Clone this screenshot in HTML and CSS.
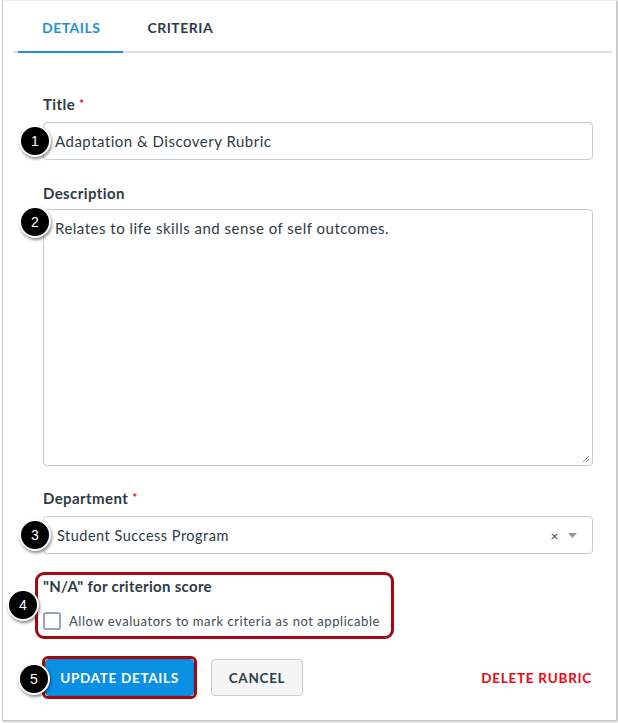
FILE: index.html
```html
<!DOCTYPE html>
<html>
<head>
<meta charset="utf-8">
<link rel="stylesheet" href="styles.css">
</head>
<body>
<div class="panel">
  <div class="tabs">
    <div class="tab active">DETAILS</div>
    <div class="tab">CRITERIA</div>
  </div>
  <div class="form">
    <div class="field">
      <label class="label">Title <span class="req">*</span></label>
      <div class="control input">
        <span class="badge b1">1</span>
        Adaptation &amp; Discovery Rubric
      </div>
    </div>
    <div class="field">
      <label class="label">Description</label>
      <div class="control textarea">
        <span class="badge b2">2</span>
        Relates to life skills and sense of self outcomes.
        <svg class="grip" width="8" height="8" viewBox="0 0 8 8"><path d="M7 1 L1 7 M7 4 L4 7" stroke="#8d959b" stroke-width="1"/></svg>
      </div>
    </div>
    <div class="field">
      <label class="label">Department <span class="req">*</span></label>
      <div class="control select">
        <span class="badge b3">3</span>
        <span class="sel-text">Student Success Program</span>
        <span class="sel-x">×</span>
        <svg class="sel-caret" width="9" height="5" viewBox="0 0 9 5"><path d="M0 0 H9 L4.5 5 Z" fill="#8d959b"/></svg>
      </div>
    </div>
    <div class="na-box">
      <span class="badge b4">4</span>
      <div class="na-label">"N/A" for criterion score</div>
      <div class="check-row">
        <span class="checkbox"></span>
        <span class="check-text">Allow evaluators to mark criteria as not applicable</span>
      </div>
    </div>
    <div class="actions">
      <div class="hl-btn">
        <span class="badge b5">5</span>
        <button class="btn primary">UPDATE DETAILS</button>
      </div>
      <button class="btn secondary">CANCEL</button>
      <span class="delete">DELETE RUBRIC</span>
    </div>
  </div>
</div>
</body>
</html>
```
FILE: styles.css
```css
* { box-sizing: border-box; }
html, body { margin: 0; padding: 0; background: #fff; }
body {
  font-family: Lato, "Liberation Sans", sans-serif;
  color: #2d3b45;
  width: 618px;
  height: 723px;
  overflow: hidden;
}
.panel {
  margin-left: 2px;
  width: 615px;
  height: 721px;
  border: 1px solid #c9c9c9;
  border-top-color: #ececec;
  box-shadow: 1px 1px 2px rgba(0,0,0,0.25);
  padding: 0 4px 0 10px;
}
.tabs {
  display: flex;
  height: 52px;
  border-bottom: 2px solid #dde1e4;
}
.tab {
  font-weight: 700;
  font-size: 14px;
  letter-spacing: 0.5px;
  padding: 18px 24px 0;
  height: 52px;
  color: #2d3b45;
}
.tab.active {
  color: #1b8fdb;
  margin-left: 5px;
  padding-left: 24px;
  padding-right: 23px;
  border-bottom: 2px solid #1b8fdb;
  margin-bottom: -2px;
}
.form {
  padding: 0 0 0 30px;
  width: 580px;
}
.field { display: flex; flex-direction: column; }
.label {
  font-weight: 700;
  font-size: 15px;
  letter-spacing: 0.4px;
  line-height: 20px;
  margin-top: 41px;
  margin-bottom: 6px;
  color: #2d3b45;
}
.field:nth-child(2) .label { margin-top: 23px; }
.field:nth-child(3) .label { margin-top: 22px; }
.req { color: #ee0612; font-size: 12px; position: relative; top: -2px; }
.control {
  position: relative;
  border: 1px solid #c7cdd1;
  border-radius: 4px;
  width: 550px;
  font-size: 15px;
  letter-spacing: 0.5px;
  color: #2d3b45;
}
.input {
  height: 38px;
  display: flex;
  align-items: center;
  padding-left: 11px;
  box-shadow: inset 0 1px 1px rgba(0,0,0,0.05);
}
.textarea {
  height: 257px;
  padding: 9px 11px;
  line-height: 19px;
}
.grip { position: absolute; right: 2px; bottom: 2px; }
.select {
  height: 38px;
  display: flex;
  align-items: center;
  padding-left: 13px;
  font-size: 14.5px;
}
.sel-text { flex: 1; }
.sel-x { font-size: 14px; color: #444; margin-right: 9px; }
.sel-caret { margin-right: 15px; }
.badge {
  position: absolute;
  width: 32px;
  height: 32px;
  border-radius: 50%;
  background: #000;
  border: 2px solid #fff;
  color: #fff;
  font-size: 14px;
  letter-spacing: 0;
  font-weight: 400;
  font-family: "Liberation Sans", Arial, sans-serif;
  display: flex;
  align-items: center;
  justify-content: center;
  box-shadow: 1px 2px 3px rgba(0,0,0,0.45);
  z-index: 2;
}
.b1 { left: -25px; top: 2px; }
.b2 { left: -25px; top: -4px; }
.b3 { left: -25px; top: 2px; }
.b4 { left: -31px; top: 14px; }
.b5 { left: -27px; top: 4px; }
.na-box {
  position: relative;
  margin-top: 18px;
  margin-left: -8px;
  width: 359px;
  height: 67px;
  border: 3px solid #a20a12;
  border-radius: 9px;
  padding: 1px 0 0 5px;
}
.na-label {
  font-weight: 700;
  font-size: 15px;
  letter-spacing: 0.3px;
  line-height: 20px;
  color: #2d3b45;
}
.check-row {
  display: flex;
  align-items: center;
  margin-top: 16px;
}
.checkbox {
  width: 18px;
  height: 18px;
  border: 2px solid #9aa3a9;
  border-radius: 3px;
  background: #fff;
  margin-right: 8px;
}
.check-text {
  font-size: 13px;
  color: #3e4b55;
  letter-spacing: 0.55px;
}
.actions {
  display: flex;
  align-items: center;
  margin-top: 17px;
  width: 550px;
}
.hl-btn {
  position: relative;
  margin-left: -1px;
  border: 3px solid #a20a12;
  border-radius: 6px;
  padding: 0;
  display: flex;
  margin-right: 14px;
}
.btn {
  font-family: Lato, "Liberation Sans", sans-serif;
  font-weight: 700;
  font-size: 13.5px;
  letter-spacing: 0.7px;
  border-radius: 4px;
  height: 37px;
  cursor: pointer;
}
.primary {
  background: #0a8fe3;
  color: #fff;
  border: 1px solid #0a82cf;
  width: 149px;
  padding: 0;
}
.secondary {
  background: #f5f5f5;
  color: #2d3b45;
  border: 1px solid #c7cdd1;
  width: 92px;
  padding: 0;
}
.delete {
  margin-left: auto;
  color: #ee0612;
  font-weight: 700;
  font-size: 13.5px;
  letter-spacing: 0.75px;
  margin-right: 1px;
}
```
